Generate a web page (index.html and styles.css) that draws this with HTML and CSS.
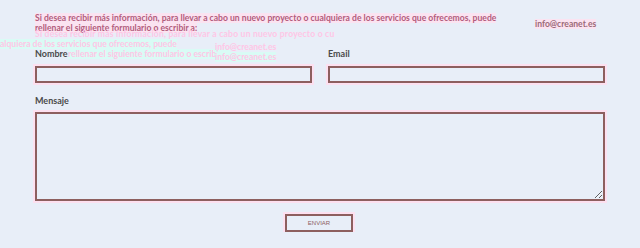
FILE: index.html
```html
<!DOCTYPE html>
<html>
<head>
  <meta charset="UTF-8">
  <title>Contacto</title>
  <link rel="stylesheet" href="styles.css">
</head>
<body>

<div id="contact">
  <div class="intro">
    <p class="lead"><span>Si desea recibir más información, para llevar a cabo un nuevo proyecto o cualquiera de los servicios que ofrecemos, puede rellenar el siguiente formulario o escribir a:</span></p>
    <span class="mail">info@creanet.es</span>
  </div>

  <div class="ghost">
    <div class="g1">Si desea recibir más información, para llevar a cabo un nuevo proyecto o cu</div>
    <div class="g2">alquiera de los servicios que ofrecemos, puede</div>
    <div class="g3">rellenar el siguiente formulario o escribir a.</div>
    <div class="g4">info@creanet.es</div>
    <div class="g5">info@creanet.es</div>
  </div>

  <div class="row">
    <div class="field">
      <label>Nombre</label>
      <input type="text">
    </div>
    <div class="field">
      <label>Email</label>
      <input type="text">
    </div>
  </div>

  <div class="field msg">
    <label>Mensaje</label>
    <textarea></textarea>
  </div>

  <div class="send">
    <button>ENVIAR</button>
  </div>
</div>

</body>
</html>
```

FILE: styles.css
```css
body, html {
  margin: 0;
  padding: 0;
  background: #e8eef8;
  font-family: "Lato", sans-serif;
}
#contact {
  position: relative;
  padding: 13px 35px 0 35px;
  width: 570px;
}
.intro {
  display: flex;
  align-items: flex-start;
  gap: 28px;
}
.lead {
  margin: 0;
  width: 472px;
  font-size: 8.6px;
  font-weight: bold;
  line-height: 10px;
  color: #b25c7c;
}
.lead span {
  background: #fbe3f1;
}
.mail {
  margin-top: 6px;
  font-size: 8.6px;
  font-weight: bold;
  color: #9b6a78;
  background: #fbe3f1;
}
.ghost {
  position: absolute;
  left: 0;
  top: 0;
  font-size: 8.6px;
  font-weight: bold;
  line-height: 10px;
  color: #ffc6e6;
  pointer-events: none;
}
.ghost div {
  position: absolute;
  white-space: nowrap;
}
.g1 { left: 35px; top: 29px; letter-spacing: 0.2px; }
.g2 { left: 0; top: 39px; background: #d9fbf5; }
.g3 { left: 68px; top: 49px; background: #d9fbf5; }
.g4 { left: 215px; top: 42px; }
.g5 { left: 215px; top: 52px; background: #d9fbf5; }
.row {
  display: flex;
  gap: 16px;
  margin-top: 15px;
}
.row .field {
  flex: 1;
}
.field {
  position: relative;
}
label {
  display: block;
  font-size: 9px;
  font-weight: bold;
  line-height: 12px;
  height: 12px;
  margin-bottom: 6px;
  color: #4a4a4a;
}
.row label {
  position: relative;
  z-index: 1;
}
input, textarea {
  display: block;
  box-sizing: border-box;
  width: 100%;
  margin: 0;
  border: 2px solid #8d5f5f;
  background: #e8eef8;
  box-shadow: 0 0 0 2px #fde0f0;
  outline: none;
}
input {
  height: 17px;
}
.msg {
  margin-top: 12px;
}
.msg label {
  margin-bottom: 5px;
}
textarea {
  height: 89px;
  resize: vertical;
}
.send {
  display: flex;
  justify-content: center;
  margin-top: 13px;
  margin-left: -2px;
}
button {
  width: 68px;
  height: 18px;
  padding: 0;
  border: 2px solid #8d5f5f;
  background: #e8eef8;
  box-shadow: 0 0 0 2px #fde0f0;
  font-family: "Liberation Sans", sans-serif;
  font-size: 6px;
  color: #8d5f5f;
}
```
